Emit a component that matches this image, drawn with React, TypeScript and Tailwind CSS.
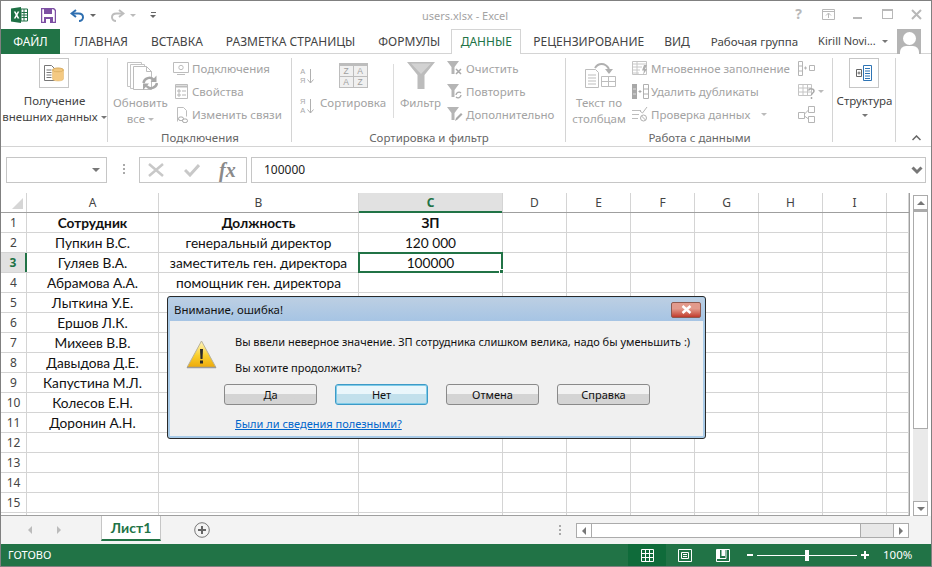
import { ReactNode } from 'react';

const ui = "font-['Noto_Sans',sans-serif]";
const cols = [
  { name: 'A', w: 'w-[132px]' },
  { name: 'B', w: 'w-[200px]' },
  { name: 'C', w: 'w-[144px]' },
  { name: 'D', w: 'w-[64px]' },
  { name: 'E', w: 'w-[64px]' },
  { name: 'F', w: 'w-[64px]' },
  { name: 'G', w: 'w-[64px]' },
  { name: 'H', w: 'w-[64px]' },
  { name: 'I', w: 'w-[64px]' },
  { name: '', w: 'w-[22px]' },
];

const rows: [string, string, string][] = [
  ['Сотрудник', 'Должность', 'ЗП'],
  ['Пупкин В.С.', 'генеральный директор', '120 000'],
  ['Гуляев В.А.', 'заместитель ген. директора', '100000'],
  ['Абрамова А.А.', 'помощник ген. директора', ''],
  ['Лыткина У.Е.', '', ''],
  ['Ершов Л.К.', '', ''],
  ['Михеев В.В.', '', ''],
  ['Давыдова Д.Е.', '', ''],
  ['Капустина М.Л.', '', ''],
  ['Колесов Е.Н.', '', ''],
  ['Доронин А.Н.', '', ''],
  ['', '', ''],
  ['', '', ''],
  ['', '', ''],
  ['', '', ''],
  ['', '', ''],
];

const tabs = ['ГЛАВНАЯ', 'ВСТАВКА', 'РАЗМЕТКА СТРАНИЦЫ', 'ФОРМУЛЫ'];

function Caret({ className = 'border-t-[#777]' }: { className?: string }) {
  return <span className={`inline-block h-0 w-0 border-x-[3px] border-t-[3px] border-x-transparent ${className}`} />;
}

function SmallItem({ icon, label, caret }: { icon: ReactNode; label: string; caret?: boolean }) {
  return (
    <div className="flex h-[23px] items-center whitespace-nowrap text-[11.500px] text-[#a3a3a3]">
      <span className="flex w-[19px] shrink-0 items-center">{icon}</span>
      {label}
      {caret && <Caret className="ml-[11px] border-t-[#bbb]" />}
    </div>
  );
}

function Group({ w, label, children }: { w: string; label: string; children: ReactNode }) {
  return (
    <div className={`relative flex h-[88px] shrink-0 flex-col after:absolute after:top-0 after:right-0 after:h-[84px] after:w-px after:bg-[#d4d4d4] ${w}`}>
      <div className="flex min-h-0 flex-1">{children}</div>
      <div className="h-[16px] text-center text-[11.500px] leading-[16px] text-[#666]">{label}</div>
    </div>
  );
}

function ExcelLogo() {
  return (
    <svg width="17" height="16" viewBox="0 0 17 16">
      <path d="M0 1.500 10 0v16L0 14.500z" fill="#1e7145" />
      <path d="M10 2h6.500v12H10z" fill="#fff" stroke="#1e7145" />
      <path d="M10.500 5.500h6M10.500 8h6M10.500 10.500h6M13 2v12" stroke="#1e7145" strokeWidth="1" />
      <path d="M2.800 4.500h1.800l1 2 1-2h1.700L6.500 8l1.900 3.500H6.600l-1-2.100-1 2.100H2.800L4.700 8z" fill="#fff" />
    </svg>
  );
}

function SaveIcon() {
  return (
    <svg width="15" height="15" viewBox="0 0 15 15">
      <path d="M.5.500h12l2 2v12H.500z" fill="#fff" stroke="#7d4fa3" strokeWidth="1.500" />
      <path d="M3 1h8v5H3z" fill="#7d4fa3" />
      <path d="M3 9h9v6H3z" fill="#7d4fa3" />
      <path d="M5 11h4v4H5z" fill="#fff" />
    </svg>
  );
}

function UndoIcon({ color, flip }: { color: string; flip?: boolean }) {
  return (
    <svg width="15" height="13" viewBox="0 0 15 13" className={flip ? '-scale-x-100' : ''}>
      <path d="M6 1 1.500 4.500 6 8" fill="none" stroke={color} strokeWidth="2" />
      <path d="M2 4.500h6.500c3 0 4.500 1.700 4.500 3.800S11.300 12 9 12" fill="none" stroke={color} strokeWidth="2" />
    </svg>
  );
}

function DocBox() {
  return (
    <div className="mr-[2px] flex h-[30px] w-[30px] items-center justify-center border border-[#c6c6c6] bg-white">
      <svg width="20" height="17" viewBox="0 0 20 17">
        <path d="M.5.500h7l3 3v12H.500z" fill="#fff" stroke="#777" />
        <path d="M2.500 5h5M2.500 7.500h5M2.500 10h5M2.500 12.500h5" stroke="#777" />
        <ellipse cx="14" cy="5" rx="5.500" ry="2" fill="#f2c77e" stroke="#d7a95a" />
        <path d="M8.500 5v9c0 1 2.500 2 5.500 2s5.500-1 5.500-2V5c0 1-2.500 2-5.500 2S8.500 6 8.500 5z" fill="#f4c982" stroke="#e0b469" strokeWidth=".5" />
      </svg>
    </div>
  );
}

function RefreshAll() {
  return (
    <svg width="31" height="31" viewBox="0 0 31 31" className="ml-[4px]">
      <path d="M.5.500h14v24H.500z" fill="#fff" stroke="#c4c4c4" />
      <path d="M3.500 2.500h14v24h-14z" fill="#fff" stroke="#c4c4c4" />
      <path d="M6.500 4.500h13l5 5v18h-18z" fill="#fff" stroke="#bdbdbd" />
      <path d="M19.500 4.500v5h5" fill="none" stroke="#bdbdbd" />
      <path d="M16.500 21a6 6 0 0 1 10.500-3" fill="none" stroke="#a8a8a8" strokeWidth="2.500" />
      <path d="M30 21a6 6 0 0 1-10.500 3" fill="none" stroke="#a8a8a8" strokeWidth="2.500" />
      <path d="M29.500 13.500V20h-6zM16 28v-6.500h6z" fill="#a8a8a8" />
    </svg>
  );
}

function ConnIcon() {
  return (
    <svg width="16" height="14" viewBox="0 0 16 14">
      <path d="M.5.500h15v10H.500z" fill="none" stroke="#bdbdbd" />
      <path d="M4 12.500h8" stroke="#bdbdbd" />
      <circle cx="8" cy="5.500" r="2.200" fill="none" stroke="#bdbdbd" />
    </svg>
  );
}

function PropsIcon() {
  return (
    <svg width="15" height="15" viewBox="0 0 15 15" className="ml-[2px]">
      <path d="M.5.500h12v14H.500z" fill="none" stroke="#bdbdbd" />
      <path d="M0 2.500h13" stroke="#bdbdbd" strokeWidth="2" />
      <path d="M3 6h2v2H3zM3 10h2v2H3zM7 7h4M7 11h4" fill="none" stroke="#b5b5b5" />
    </svg>
  );
}

function LinkIcon() {
  return (
    <svg width="15" height="16" viewBox="0 0 15 16" className="ml-[4px]">
      <path d="M.5 14.500V.500h6l3 3v6" fill="none" stroke="#bdbdbd" />
      <rect x="1.500" y="10" width="5" height="3.500" rx="1.700" fill="#fff" stroke="#a8a8a8" />
      <rect x="5.500" y="12" width="5" height="3.500" rx="1.700" fill="#fff" stroke="#a8a8a8" />
    </svg>
  );
}

function SortSmall({ flip }: { flip?: boolean }) {
  return (
    <div className="flex items-center">
      <div className="flex flex-col text-center font-['Liberation_Sans',sans-serif] text-[7.500px] leading-[8.600px] text-[#a8a8a8]">
        <span>{flip ? 'Я' : 'А'}</span>
        <span>{flip ? 'А' : 'Я'}</span>
      </div>
      <svg width="7" height="15" viewBox="0 0 7 15" className="ml-[2px]">
        <path d="M3.500 0v14M.5 10.500l3 3.500 3-3.500" fill="none" stroke="#b0b0b0" />
      </svg>
    </div>
  );
}

function SortBig() {
  return (
    <div className="flex h-[25px] w-[29px] flex-col bg-[#bdbdbd] p-px pt-[3px]">
      <div className="grid flex-1 grid-cols-2 gap-px text-center font-['Liberation_Sans',sans-serif] text-[8.500px] leading-[10px] text-[#a0a0a0]">
        {['Z', 'A', 'A', 'Z'].map((c, i) => (
          <span key={i} className="bg-[#f0f0f0]">{c}</span>
        ))}
      </div>
    </div>
  );
}

function FunnelBig() {
  return (
    <svg width="28" height="27" viewBox="0 0 28 27">
      <path d="M0 0h28L17.500 13v14h-7V13z" fill="#bcbcbc" />
      <path d="M4 1.500h20L14 12z" fill="#d2d2d2" />
    </svg>
  );
}

function FunnelSmall({ mark }: { mark: 'x' | 'r' | 'p' }) {
  return (
    <svg width="16" height="15" viewBox="0 0 16 15">
      <path d="M0 0h12L7.500 6v7h-3V6z" fill="#b5b5b5" />
      {mark === 'x' && <path d="M9 8l5 5M14 8l-5 5" stroke="#a9a9a9" strokeWidth="1.500" />}
      {mark === 'r' && <path d="M9 11a3 3 0 0 1 5-2M14 11a3 3 0 0 1-5 2" fill="none" stroke="#a9a9a9" strokeWidth="1.300" />}
      {mark === 'p' && <path d="M8 14l1-3 5-5 1.500 1.500-5 5z" fill="#a9a9a9" />}
    </svg>
  );
}

function TextColsIcon() {
  return (
    <svg width="31" height="26" viewBox="0 0 31 26" className="ml-[3px]">
      <path d="M.5 7.500h10l3 3v15H.500z" fill="#fff" stroke="#bdbdbd" />
      <path d="M3 13h8M3 16h8M3 19h8M3 22h8" stroke="#bdbdbd" />
      <path d="M16.500 14.500h14v10h-14z" fill="#fff" stroke="#bdbdbd" />
      <path d="M16.500 19.500h14M23.500 14.500v10" stroke="#bdbdbd" />
      <path d="M10 6c3-5 10-6 14 1" fill="none" stroke="#b0b0b0" strokeWidth="2" />
      <path d="M20 7h8l-4 5z" fill="#b0b0b0" />
    </svg>
  );
}

function FlashIcon() {
  return (
    <svg width="16" height="15" viewBox="0 0 16 15">
      <path d="M.5.500h14v13H.500z" fill="none" stroke="#c4c4c4" />
      <path d="M1 3h13M1 6h9M1 9h7M1 12h6M5 1v12" stroke="#c8c8c8" />
      <path d="M12 4h3l-2 4h2l-4 6 1-4.500h-2z" fill="#b0b0b0" />
    </svg>
  );
}

function DedupeIcon() {
  return (
    <svg width="17" height="15" viewBox="0 0 17 15">
      <path d="M0 0h5v15H0z" fill="#a8a8a8" />
      <path d="M1 5h3M1 10h3" stroke="#ddd" />
      <path d="M11.500.500h5v14h-5zM11.500 5h5M11.500 10h5" fill="#fff" stroke="#b0b0b0" />
      <path d="M6.500 7.500h3M8 6v3" stroke="#a8a8a8" />
    </svg>
  );
}

function ValidateIcon() {
  return (
    <svg width="16" height="15" viewBox="0 0 16 15">
      <path d="M0 3.500h9M0 7.500h7M0 11.500h6" stroke="#bdbdbd" />
      <path d="M8 4l2.500 2L15 0" fill="none" stroke="#b5b5b5" />
      <circle cx="11.500" cy="11" r="3" fill="none" stroke="#b0b0b0" />
      <path d="M9.500 9l4 4" stroke="#b0b0b0" />
    </svg>
  );
}

function GearCols({ kind }: { kind: 0 | 1 | 2 }) {
  if (kind === 0)
    return (
      <svg width="17" height="15" viewBox="0 0 17 15">
        <path d="M.5.500h4v14h-4zM.5 5h4M.5 10h4" fill="#fff" stroke="#b5b5b5" />
        <path d="M6 7h3M7.500 5.500v3" stroke="#b5b5b5" />
        <path d="M11.500 4.500h5v5h-5z" fill="#fff" stroke="#b5b5b5" />
      </svg>
    );
  if (kind === 1)
    return (
      <div className="flex items-center">
        <svg width="17" height="16" viewBox="0 0 17 16">
          <path d="M.5.500h13v11H.500zM.5 4h13M.5 8h13M5 .500v11M9.500 .500v11" fill="#fff" stroke="#c4c4c4" />
          <path d="M10.500 6.500c1-2.500 5.500-2 5.500.500 0 2-2.500 2-2.500 4M13.500 13v2" fill="none" stroke="#a8a8a8" strokeWidth="1.500" />
        </svg>
        <Caret className="ml-[3px] border-t-[#bbb]" />
      </div>
    );
  return (
    <svg width="17" height="17" viewBox="0 0 17 17">
      <path d="M.5 6.500h6v6h-6zM10.500.500h6v6h-6zM10.500 10.500h6v6h-6z" fill="#fff" stroke="#b5b5b5" />
      <path d="M6.500 8L10.500 4M6.500 10l4 3" stroke="#b5b5b5" />
    </svg>
  );
}

function OutlineBox() {
  return (
    <div className="mr-[2px] flex h-[30px] w-[30px] items-center justify-center border border-[#c6c6c6] bg-white">
      <svg width="16" height="16" viewBox="0 0 16 16">
        <path d="M.5 4.500h5v7h-5z" fill="#fff" stroke="#666" />
        <path d="M1.500 8h3M3 6.500v3" stroke="#666" />
        <path d="M7.500.500h8v15h-8z" fill="#fff" stroke="#2f75b5" />
        <path d="M9 3.500h5M9 6h5M9 8.500h5M9 11h5M9 13.500h5" stroke="#2f75b5" />
      </svg>
    </div>
  );
}

function WarnIcon() {
  return (
    <svg width="31" height="29" viewBox="0 0 31 29">
      <defs>
        <linearGradient id="warnFill" x1="0" y1="0" x2="0" y2="1">
          <stop offset="0" stopColor="#fff6c4" />
          <stop offset=".55" stopColor="#f9cf2c" />
          <stop offset="1" stopColor="#eda90b" />
        </linearGradient>
      </defs>
      <path d="M15.500 1 30 27.500H1z" fill="url(#warnFill)" stroke="#b9b29a" strokeLinejoin="round" />
      <path d="M1 27.500h29" stroke="#9b9b9b" strokeWidth="1.500" />
      <path d="M14 9h3l-.5 10h-2z" fill="#2a2a2a" />
      <rect x="14" y="20.500" width="3" height="3" fill="#2a2a2a" />
    </svg>
  );
}

function DialogButton({ label, active }: { label: string; active?: boolean }) {
  return (
    <button
      className={`flex h-[21px] w-[93px] items-center justify-center rounded-[3px] border text-[11px] leading-none text-[#111] ${
        active
          ? 'border-[#3d9ac7] bg-gradient-to-b from-[#eaf6fb] from-50% to-[#c2e0ec] to-50% shadow-[inset_0_0_0_1px_#7fcbe8]'
          : 'border-[#8a8a8a] bg-gradient-to-b from-[#f2f2f2] from-50% to-[#d4d4d4] to-50%'
      }`}
    >
      {label}
    </button>
  );
}

function ErrorDialog() {
  return (
    <div className={`absolute top-[295px] left-[166px] flex h-[143px] w-[539px] flex-col rounded-[3px] border border-[#2a2a2a] bg-[#a9cbe8] p-px ${ui}`}>
      <div className="flex h-[23px] shrink-0 items-center justify-between bg-gradient-to-b from-[#bccfe3] to-[#a6c4e4] pr-[3px] pl-[5px] text-[11.400px] text-[#111]">
        <span>Внимание, ошибка!</span>
        <div className="flex h-[16px] w-[30px] items-center justify-center rounded-[2px] border border-[#8d5a50] bg-gradient-to-b from-[#e29a8c] from-40% to-[#c0392b]">
          <svg width="11" height="9" viewBox="0 0 11 9">
            <path d="M1.500 1l8 7M9.500 1l-8 7" stroke="#fff" strokeWidth="2.500" />
          </svg>
        </div>
      </div>
      <div className="mx-px mb-px flex flex-1 flex-col bg-[#f0f0f0] pt-[12px] pl-[16px] text-[11px] text-[#111]">
        <div className="flex">
          <div className="w-[49px] shrink-0 pt-[7px]">
            <WarnIcon />
          </div>
          <div className="flex flex-col gap-[9px] whitespace-nowrap leading-[17px]">
            <span>Вы ввели неверное значение. ЗП сотрудника слишком велика, надо бы уменьшить :)</span>
            <span>Вы хотите продолжить?</span>
          </div>
        </div>
        <div className="mt-[8px] ml-[38px] flex gap-[18px]">
          <DialogButton label="Да" />
          <DialogButton label="Нет" active />
          <DialogButton label="Отмена" />
          <DialogButton label="Справка" />
        </div>
        <a className="mt-[10px] ml-[49px] leading-[17px] text-[#0066cc] underline">Были ли сведения полезными?</a>
      </div>
    </div>
  );
}

export default function App() {
  return (
    <div className={`relative flex h-[567px] w-[932px] flex-col overflow-hidden border border-[#808080] bg-white ${ui}`}>
      {/* title bar */}
      <div className="relative flex h-[28px] shrink-0 items-center pl-[10px]">
        <ExcelLogo />
        <span className="ml-[13px]"><SaveIcon /></span>
        <span className="ml-[14px]"><UndoIcon color="#2f6fb0" /></span>
        <Caret className="ml-[5px] border-t-[#666]" />
        <span className="ml-[14px]"><UndoIcon color="#bdbdbd" flip /></span>
        <Caret className="ml-[5px] border-t-[#bbb]" />
        <span className="ml-[14px] flex flex-col items-center gap-[2px]">
          <span className="h-px w-[5px] bg-[#666]" />
          <Caret className="border-t-[#666]" />
        </span>
        <span className="absolute top-[7px] left-[421px] text-[11px] leading-[16px] text-[#a3a3a3]">users.xlsx - Excel</span>
        <div className="mb-[2px] ml-auto flex items-center pr-[9px] text-[#b8b8b8]">
          <span className="w-[7px] text-center text-[14px] leading-none font-bold">?</span>
          <svg width="13" height="11" viewBox="0 0 13 11" className="ml-[20px]">
            <path d="M.5.500h12v10H.500zM.5 2.500h12" fill="none" stroke="#b8b8b8" />
            <path d="M6.500 9V4.500M4 6.500l2.500-2.500L9 6.500" fill="none" stroke="#b8b8b8" />
          </svg>
          <span className="ml-[18px] h-[2px] w-[9px] translate-y-[4px] bg-[#b8b8b8]" />
          <span className="ml-[20px] h-[10px] w-[11px] border border-t-2 border-[#b8b8b8]" />
          <svg width="11" height="11" viewBox="0 0 11 11" className="ml-[18px]">
            <path d="M1 1l9 9M10 1l-9 9" stroke="#b8b8b8" strokeWidth="2" />
          </svg>
        </div>
      </div>
      {/* tabs */}
      <div className="relative flex h-[25px] shrink-0 items-end text-[12px] text-[#444]">
        <div className="absolute right-0 bottom-0 left-0 h-px bg-[#d4d4d4]" />
        <div className="relative flex h-[25px] w-[59px] items-center justify-center bg-[#217346] text-white">ФАЙЛ</div>
        {tabs.map((t, i) => (
          <div key={t} className={`flex h-[25px] items-center ${i === 0 ? 'ml-[14px]' : 'ml-[23px]'}`}>{t}</div>
        ))}
        <div className="relative ml-[11px] flex h-[25px] w-[70px] items-center justify-center border-x border-t border-[#d4d4d4] bg-white text-[#217346]">ДАННЫЕ</div>
        <div className="ml-[12px] flex h-[25px] items-center">РЕЦЕНЗИРОВАНИЕ</div>
        <div className="ml-[20px] flex h-[25px] items-center">ВИД</div>
        <div className="ml-[21px] flex h-[25px] items-center text-[11.500px]">Рабочая группа</div>
        <div className="ml-[20px] flex h-[25px] items-center pb-px text-[11px]">Kirill Novi...</div>
        <Caret className="mb-[11px] ml-[6px] border-t-[#777]" />
        <div className="relative mr-[10px] ml-auto h-[25px] w-[24px] overflow-hidden bg-[#b4b4b4]">
          <div className="absolute top-[3px] left-[6px] h-[13px] w-[13px] rounded-full bg-white" />
          <div className="absolute top-[17px] left-[3px] h-[12px] w-[19px] rounded-t-[6px] bg-white" />
        </div>
      </div>
      {/* ribbon */}
      <div className="relative flex h-[93px] shrink-0 border-b border-[#d4d4d4] pt-[4px]">
        <Group w="w-[107px]" label="">
          <div className="flex w-full flex-col items-center text-[11.500px] leading-[16px] text-[#444]">
            <DocBox />
            <span className="mt-[5px]">Получение</span>
            <span className="flex items-center gap-[3px] whitespace-nowrap">внешних данных <Caret /></span>
          </div>
        </Group>
        <Group w="w-[184px]" label="Подключения">
          <div className="flex w-[65px] shrink-0 flex-col items-center pt-[4px] text-[11.500px] leading-[16px] text-[#a3a3a3]">
            <RefreshAll />
            <span className="mt-[2px]">Обновить</span>
            <span className="flex items-center gap-[3px]">все <Caret className="border-t-[#bbb]" /></span>
          </div>
          <div className="-mt-px">
            <SmallItem icon={<ConnIcon />} label="Подключения" />
            <SmallItem icon={<PropsIcon />} label="Свойства" />
            <SmallItem icon={<LinkIcon />} label="Изменить связи" />
          </div>
        </Group>
        <Group w="w-[274px]" label="Сортировка и фильтр">
          <div className="flex w-[28px] shrink-0 flex-col gap-[13px] pt-[10px] pl-[8px]">
            <SortSmall />
            <SortSmall flip />
          </div>
          <div className="flex w-[66px] shrink-0 flex-col items-center pt-[5px] text-[11.500px] leading-[16px] text-[#a3a3a3]">
            <SortBig />
            <span className="mt-[7px]">Сортировка</span>
          </div>
          <div className="mt-[6px] ml-[7px] h-[54px] w-px shrink-0 bg-[#dcdcdc]" />
          <div className="flex w-[53px] shrink-0 flex-col items-center pt-[4px] text-[11.500px] leading-[16px] text-[#a3a3a3]">
            <FunnelBig />
            <span className="mt-[6px]">Фильтр</span>
          </div>
          <div className="-mt-px">
            <SmallItem icon={<FunnelSmall mark="x" />} label="Очистить" />
            <SmallItem icon={<FunnelSmall mark="r" />} label="Повторить" />
            <SmallItem icon={<FunnelSmall mark="p" />} label="Дополнительно" />
          </div>
        </Group>
        <Group w="w-[267px]" label="Работа с данными">
          <div className="flex w-[66px] shrink-0 flex-col items-center pt-[4px] text-[11.500px] leading-[16px] text-[#a3a3a3]">
            <TextColsIcon />
            <span className="mt-[7px]">Текст по</span>
            <span>столбцам</span>
          </div>
          <div className="-mt-px w-[166px] shrink-0">
            <SmallItem icon={<FlashIcon />} label="Мгновенное заполнение" />
            <SmallItem icon={<DedupeIcon />} label="Удалить дубликаты" />
            <SmallItem icon={<ValidateIcon />} label="Проверка данных" caret />
          </div>
          <div className="-mt-px">
            <div className="flex h-[23px] items-center"><GearCols kind={0} /></div>
            <div className="flex h-[23px] items-center"><GearCols kind={1} /></div>
            <div className="flex h-[23px] items-center"><GearCols kind={2} /></div>
          </div>
        </Group>
        <Group w="w-[63px]" label="">
          <div className="flex w-full flex-col items-center text-[11.500px] leading-[16px] text-[#444]">
            <OutlineBox />
            <span className="mt-[5px]">Структура</span>
            <span className="mt-[5px] flex"><Caret /></span>
          </div>
        </Group>
        <svg width="9" height="6" viewBox="0 0 9 6" className="absolute top-[81px] left-[911px]">
          <path d="M.5 5l4-4 4 4" fill="none" stroke="#666" strokeWidth="1.500" />
        </svg>
      </div>
      {/* formula bar */}
      <div className="flex h-[46px] shrink-0 items-start bg-white px-[5px] pt-[10px] text-[#222]">
        <div className="flex h-[26px] w-[101px] items-center justify-end border border-[#c6c6c6] pr-[6px]">
          <Caret className="border-x-[4px] border-t-[4px] border-t-[#777]" />
        </div>
        <div className="mt-[7px] mr-[14px] ml-[16px] flex flex-col gap-[2px]">
          <span className="h-[2px] w-[2px] bg-[#aaa]" />
          <span className="h-[2px] w-[2px] bg-[#aaa]" />
          <span className="h-[2px] w-[2px] bg-[#aaa]" />
        </div>
        <div className="flex h-[26px] w-[108px] items-center border border-[#c6c6c6] pl-[8px]">
          <svg width="16" height="14" viewBox="0 0 16 14">
            <path d="M1 1l14 12M15 1L1 13" stroke="#c8c8c8" strokeWidth="2.500" />
          </svg>
          <svg width="16" height="14" viewBox="0 0 16 14" className="ml-[20px]">
            <path d="M1 7l5 5L15 2" fill="none" stroke="#c8c8c8" strokeWidth="3" />
          </svg>
          <span className="ml-[19px] font-['Liberation_Serif',serif] text-[20px] leading-none font-bold text-[#8a8a8a] italic">fx</span>
        </div>
        <div className="ml-[4px] flex h-[26px] flex-1 items-center justify-between border border-[#c6c6c6] pr-[2px] pl-[12px] text-[12px]">
          <span>100000</span>
          <svg width="12" height="9" viewBox="0 0 12 9">
            <path d="M1.500 1.500 6 6l4.500-4.500" fill="none" stroke="#777" strokeWidth="3" />
          </svg>
        </div>
      </div>
      {/* sheet */}
      <div className="flex min-h-0 flex-1">
        <div className="w-[909px] shrink-0 overflow-hidden border-r border-b border-[#9f9f9f] font-['Lato',sans-serif] text-[13.700px] text-[#111]">
          <div className="flex h-[20px] border-b border-[#9f9f9f] bg-white">
            <div className="relative w-[26px] shrink-0 border-r border-[#d4d4d4]">
              <span className="absolute right-[3px] bottom-[3px] h-0 w-0 border-b-[11px] border-l-[11px] border-b-[#d6d6d6] border-l-transparent" />
            </div>
            {cols.map((c) => (
              <div
                key={c.name}
                className={`flex shrink-0 items-center justify-center border-r border-[#d4d4d4] ${ui} text-[12px] ${c.w} ${
                  c.name === 'C' ? 'relative bg-[#e1e1e1] font-bold text-[#217346] after:absolute after:right-0 after:-bottom-px after:left-0 after:h-[2px] after:bg-[#217346]' : 'text-[#444]'
                }`}
              >
                {c.name}
              </div>
            ))}
          </div>
          {rows.map((r, i) => (
            <div key={i} className="flex h-[20px] border-b border-[#d4d4d4]">
              <div
                className={`relative flex w-[26px] shrink-0 items-center justify-center border-r ${ui} text-[12px] ${
                  i === 2 ? 'border-r-2 border-[#217346] bg-[#e1e1e1] font-bold text-[#217346]' : 'border-[#d4d4d4] text-[#444]'
                }`}
              >
                {i < 15 ? i + 1 : ''}
              </div>
              {cols.map((c, j) => (
                <div key={c.name} className={`relative flex shrink-0 items-center justify-center border-r border-[#d4d4d4] pt-px ${c.w} ${i === 0 ? 'font-bold' : ''}`}>
                  {j < 3 ? r[j] : ''}
                  {i === 2 && j === 2 && (
                    <span className="absolute -top-px -right-px -bottom-px -left-px border-2 border-[#217346] after:absolute after:-right-[3px] after:-bottom-[3px] after:h-[5px] after:w-[5px] after:border after:border-white after:bg-[#217346]" />
                  )}
                </div>
              ))}
            </div>
          ))}
        </div>
        {/* vertical scrollbar */}
        <div className="mt-[2px] ml-[3px] flex h-[321px] w-[15px] shrink-0 flex-col">
          <div className="flex h-[15px] items-center justify-center border border-[#ababab] bg-white">
            <Caret className="rotate-180 border-x-[4px] border-t-[4px] border-t-[#777]" />
          </div>
          <div className="h-[2px] bg-[#ababab]" />
          <div className="h-[217px] border-x border-b border-[#ababab] bg-white" />
          <div className="flex-1 bg-[#eaeaea]" />
          <div className="flex h-[15px] items-center justify-center border border-[#ababab] bg-white">
            <Caret className="border-x-[4px] border-t-[4px] border-t-[#777]" />
          </div>
        </div>
      </div>
      {/* sheet tabs */}
      <div className="flex h-[28px] shrink-0 items-start bg-[#f3f3f3]">
        <span className="mt-[10px] ml-[27px] h-0 w-0 border-y-[4px] border-r-[4px] border-y-transparent border-r-[#bbb]" />
        <span className="mt-[10px] ml-[25px] h-0 w-0 border-y-[4px] border-l-[4px] border-y-transparent border-l-[#bbb]" />
        <div className="ml-[40px] flex h-[25px] w-[60px] items-center justify-center border-x border-b-2 border-x-[#c6c6c6] border-b-[#217346] bg-white font-['Lato',sans-serif] text-[14px] font-bold text-[#217346]">Лист1</div>
        <svg width="16" height="16" viewBox="0 0 16 16" className="mt-[6px] ml-[33px]">
          <circle cx="8" cy="8" r="7.300" fill="none" stroke="#777" />
          <path d="M8 4v8M4 8h8" stroke="#666" strokeWidth="2" />
        </svg>
        <div className="mt-[9px] ml-[349px] flex flex-col gap-[2px]">
          <span className="h-[2px] w-[2px] bg-[#aaa]" />
          <span className="h-[2px] w-[2px] bg-[#aaa]" />
          <span className="h-[2px] w-[2px] bg-[#aaa]" />
        </div>
        <div className="mt-[7px] ml-[15px] flex h-[15px] w-[333px] border border-[#ababab]">
          <div className="flex w-[15px] items-center justify-center border-r border-[#ababab] bg-white">
            <span className="h-0 w-0 border-y-[4px] border-r-[4px] border-y-transparent border-r-[#777]" />
          </div>
          <div className="w-[269px] border-r border-[#ababab] bg-white" />
          <div className="flex-1 bg-[#e8e8e8]" />
          <div className="flex w-[15px] items-center justify-center border-l border-[#ababab] bg-white">
            <span className="h-0 w-0 border-y-[4px] border-l-[4px] border-y-transparent border-l-[#777]" />
          </div>
        </div>
      </div>
      {/* status bar */}
      <div className="flex h-[22px] shrink-0 items-center bg-[#217346] pl-[7px] text-[11px] text-white">
        <span className="w-[620px]">ГОТОВО</span>
        <div className="flex h-[22px] w-[38px] items-center justify-center bg-[#0f6b3a]">
          <svg width="13" height="13" viewBox="0 0 13 13">
            <path d="M.5.500h12v12H.500zM.5 4.500h12M.5 8.500h12M4.500 .500v12M8.500 .500v12" fill="none" stroke="#fff" />
          </svg>
        </div>
        <svg width="14" height="13" viewBox="0 0 14 13" className="ml-[12px]">
          <path d="M.5.500h13v12H.500z" fill="none" stroke="#fff" />
          <path d="M3.500 3.500h7v6h-7zM5 5.500h4M5 7.500h4" fill="none" stroke="#fff" />
        </svg>
        <svg width="14" height="13" viewBox="0 0 14 13" className="ml-[24px]">
          <path d="M.5.500h13v12H.500z" fill="none" stroke="#fff" />
          <path d="M1 1h3v8H1zM5.500 1H9v6H5.500z" fill="#fff" />
          <path d="M.5 9.500H10V.500" fill="none" stroke="#fff" />
        </svg>
        <span className="ml-[17px] h-[2px] w-[6px] bg-white" />
        <div className="relative ml-[4px] h-px w-[100px] bg-white">
          <span className="absolute -top-[5px] left-[48px] h-[11px] w-[4px] bg-white" />
        </div>
        <svg width="8" height="8" viewBox="0 0 8 8" className="ml-[4px]">
          <path d="M4 0v8M0 4h8" stroke="#fff" strokeWidth="2" />
        </svg>
        <span className="ml-[14px] text-[11.500px]">100%</span>
      </div>
      <ErrorDialog />
    </div>
  );
}
